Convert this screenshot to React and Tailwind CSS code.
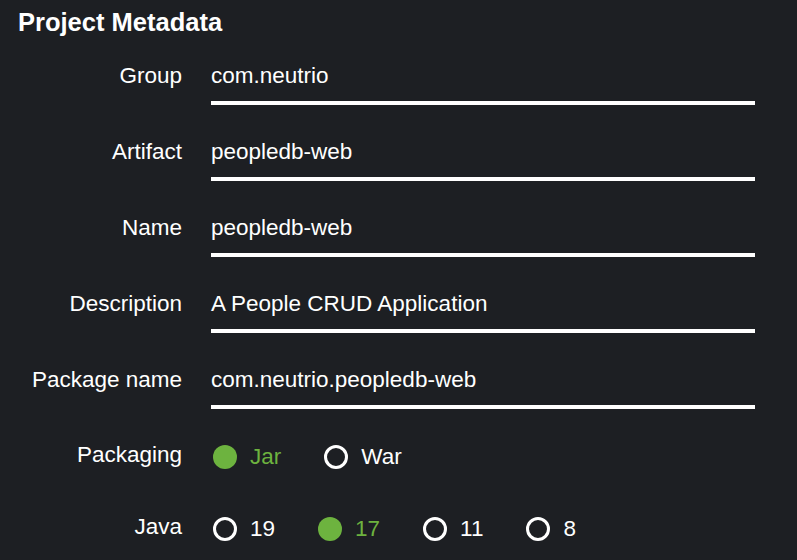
import React from "react";

const fields = [
  ["Group", "com.neutrio"],
  ["Artifact", "peopledb-web"],
  ["Name", "peopledb-web"],
  ["Description", "A People CRUD Application"],
  ["Package name", "com.neutrio.peopledb-web"],
];

function Radio({ label, checked }) {
  return (
    <div className="flex items-center gap-[13px]">
      {checked ? (
        <span className="block w-[24px] h-[24px] rounded-full bg-[#6db33f]" />
      ) : (
        <span className="block w-[24px] h-[24px] rounded-full border-[3px] border-white" />
      )}
      <span className={checked ? "text-[#6db33f]" : "text-white"}>{label}</span>
    </div>
  );
}

export default function App() {
  return (
    <div
      className="w-[797px] h-[560px] bg-[#1d1f23] text-white text-[22.5px] leading-[26px] overflow-hidden"
      style={{ fontFamily: '"Liberation Sans", Arial, sans-serif' }}
    >
      <div className="pt-[8px] pl-[18px] font-bold text-[25.5px] leading-[28px]">Project Metadata</div>
      <div className="flex flex-col gap-[34px] mt-[27px]">
        {fields.map(([label, value]) => (
          <div key={label} className="flex items-start">
            <div className="w-[182px] text-right">{label}</div>
            <div className="ml-[29px] w-[544px] pb-[12px] border-b-[4px] border-white">{value}</div>
          </div>
        ))}
      </div>
      <div className="flex items-center mt-[35px]">
        <div className="w-[182px] text-right -mt-[4px]">Packaging</div>
        <div className="ml-[31px] flex items-center gap-[43px]">
          <Radio label="Jar" checked />
          <Radio label="War" />
        </div>
      </div>
      <div className="flex items-center mt-[46px]">
        <div className="w-[182px] text-right -mt-[4px]">Java</div>
        <div className="ml-[31px] flex items-center gap-[43px]">
          <Radio label="19" />
          <Radio label="17" checked />
          <Radio label="11" />
          <Radio label="8" />
        </div>
      </div>
    </div>
  );
}
